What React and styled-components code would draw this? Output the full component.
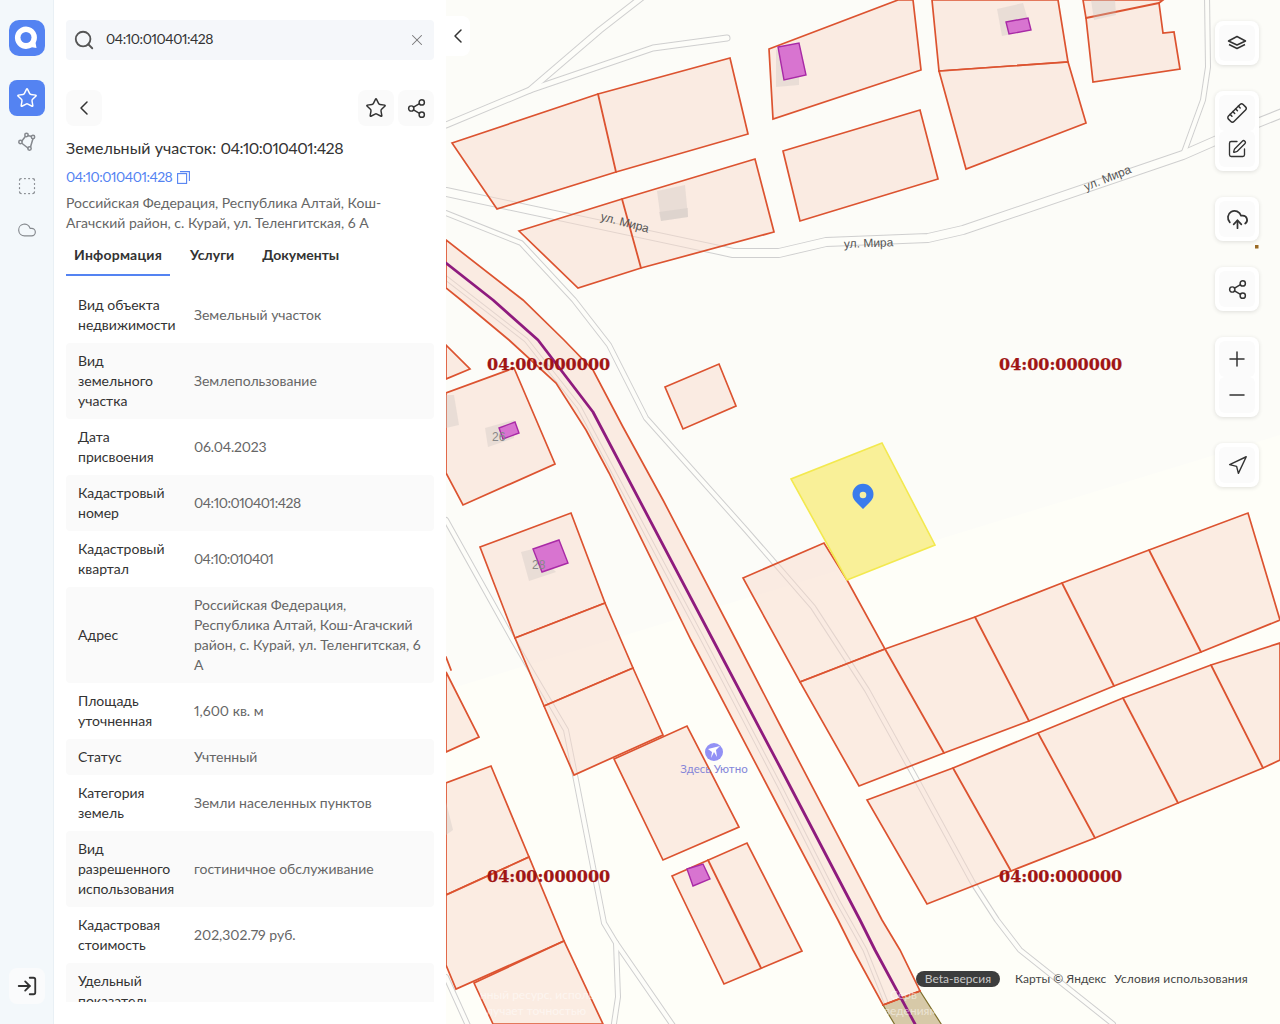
import React from 'react';
import styled, { createGlobalStyle } from 'styled-components';
import { Star, Search, X, ChevronLeft, Share2, SquareDashed, Cloud, LogIn, Ruler, SquarePen, CloudUpload, Plus, Minus, Navigation } from 'lucide-react';

const Global = createGlobalStyle`
  html, body { margin: 0; height: 100%; overflow: hidden; background: #fff; }
  body { font-family: "Lato", "Open Sans", "Liberation Sans", sans-serif; color: #333; font-variant-numeric: proportional-nums lining-nums; font-feature-settings: "pnum" 1, "lnum" 1; }
  * { box-sizing: border-box; }
`;

const Page = styled.div`display: flex; width: 1280px; height: 1024px; overflow: hidden;`;
const Rail = styled.nav`
  width: 54px; flex: none; display: flex; flex-direction: column; align-items: center;
  padding: 20px 0 20px; background: #f3f8fb; border-right: 1px solid #e9f0f5;
`;
const RailTop = styled.div`display: flex; flex-direction: column; align-items: center; gap: 8px; margin-top: 24px; flex: 1;`;
const Logo = styled.div`width: 36px; height: 36px; border-radius: 10px; background: #5483f2;`;
const RailButton = styled.button`
  width: 36px; height: 36px; border: 0; padding: 0; border-radius: 8px; display: flex; align-items: center; justify-content: center;
  background: ${p => p.$active ? '#5483f2' : p.$soft ? '#fafbfc' : 'transparent'};
  color: ${p => p.$active ? '#fff' : p.$soft ? '#333' : '#85898e'};
`;
const Panel = styled.aside`width: 392px; flex: none; background: #fff; display: flex; flex-direction: column; padding: 20px 12px 22px;`;
const SearchBar = styled.div`height: 40px; flex: none; background: #f5f7fa; border-radius: 4px; display: flex; align-items: center; padding: 0 8px 0 7px; color: #555;`;
const SearchText = styled.span`flex: 1; margin-left: 11px; font-size: 14px; line-height: 20px; margin-top: -2px; letter-spacing: -.45px; color: #333;`;
const ActionRow = styled.div`display: flex; align-items: center; margin-top: 30px; gap: 4px;`;
const SquareButton = styled.button`
  width: 36px; height: 36px; border: 0; padding: 0; border-radius: 8px; background: #fafafa; color: #333;
  display: flex; align-items: center; justify-content: center;
`;
const Spacer = styled.div`flex: 1;`;
const Title = styled.h1`margin: 11px 0 0; font-size: 16px; line-height: 22px; font-weight: 400; letter-spacing: .05px; color: #333;`;
const Digits = styled.span`letter-spacing: -.5px;`;
const LinkRow = styled.div`display: flex; align-items: center; gap: 5px; margin-top: 8px; font-size: 14px; line-height: 20px; color: #5483f2;`;
const Address = styled.p`margin: 6px 0 0; font-size: 14px; line-height: 20px; color: #666;`;
const Tabs = styled.div`display: flex; gap: 12px; margin-top: 10px; height: 44px; flex: none;`;
const Tab = styled.div`
  padding: 2px 8px 0; height: 33px; font-size: 14px; line-height: 20px; font-weight: 700; color: #333;
  letter-spacing: ${p => p.$active ? '.2px' : '0'};
  border-bottom: 2px solid ${p => p.$active ? '#5483f2' : 'transparent'};
`;
const Table = styled.div`flex: 1; min-height: 0; overflow: hidden;`;
const Row = styled.div`
  display: grid; grid-template-columns: 104px 1fr; column-gap: 12px; align-items: center; padding: 8px 12px;
  font-size: 14px; line-height: 20px; border-radius: 4px;
  &:nth-child(even) { background: #fafafa; }
`;
const Label = styled.div`color: #333;`;
const Value = styled.div`color: #666; letter-spacing: ${p => p.$spacing || '0'};`;
const MapArea = styled.main`flex: 1; position: relative; overflow: hidden; background: #fcfcf9;`;
const MapDrawing = styled.svg`display: block; width: 834px; height: 1024px;`;
const Collapse = styled.button`
  position: absolute; left: 0; top: 16px; width: 24px; height: 40px; border: 0; padding: 0; background: #fff;
  border-radius: 0 8px 8px 0; display: flex; align-items: center; justify-content: center; color: #333;
`;
const Controls = styled.div`position: absolute; top: 21px; right: 21px; display: flex; flex-direction: column; gap: 26px;`;
const Card = styled.div`
  width: 44px; padding: 4px; background: #fff; border-radius: 8px; box-shadow: 0 1px 4px rgba(0,0,0,.12);
  display: flex; flex-direction: column;
`;
const CardButton = styled.button`
  width: 36px; height: 36px; border: 0; padding: 0; background: #fbfbfb; color: #333; display: flex; align-items: center; justify-content: center;
  border-radius: 6px;
`;
const MirroredRuler = styled(Ruler)`transform: scaleX(-1);`;
const Footer = styled.div`
  position: absolute; left: 470px; top: 971px; display: flex; align-items: center; font-size: 12px; line-height: 16px; color: #444;
`;
const Beta = styled.span`height: 16px; width: 84px; text-align: center; border-radius: 8px; background: #3c3d3d; color: #c9c9c9; margin-right: 15px;`;
const FooterLink = styled.span`margin-right: 8px; white-space: nowrap; letter-spacing: ${p => p.$wide ? '.15px' : '0'};`;

const rows = [
  ['Вид объекта недвижимости', 'Земельный участок'],
  ['Вид земельного участка', 'Землепользование'],
  ['Дата присвоения', '06.04.2023', '-.2px'],
  ['Кадастровый номер', '04:10:010401:428', '-.48px'],
  ['Кадастровый квартал', '04:10:010401', '-.6px'],
  ['Адрес', 'Российская Федерация, Республика Алтай, Кош-Агачский район, с. Курай, ул. Теленгитская, 6 А'],
  ['Площадь уточненная', '1,600 кв. м'],
  ['Статус', 'Учтенный'],
  ['Категория земель', 'Земли населенных пунктов'],
  ['Вид разрешенного использования', 'гостиничное обслуживание'],
  ['Кадастровая стоимость', '202,302.79 руб.'],
  ['Удельный показатель', ''],
];

const parcels = [
  '452,143 598,94 730,58 748,134 616,172 497,209',
  '519,231 622,199 755,159 774,232 641,268 578,288',
  '769,49 898,0 913,0 921,70 773,119',
  '783,151 920,110 938,179 800,221',
  '932,0 1058,0 1068,62 939,71',
  '939,71 1068,62 1086,123 966,169',
  '1083,0 1163,0 1159,3 1163,33 1174,32 1180,69 1093,82 1086,18',
  '446,240 523,300 564,340 593,370 623,427 663,500 736,640 780,725 882,920 900,950 920,991 883,1005 853,950 838,920 780,810 691,640 609,473 586,430 556,383 509,340 461,300 446,288',
  '665,387 719,364 736,406 683,429',
  '446,345 470,369 446,379',
  '446,393 514,368 555,464 463,505 446,473',
  '480,547 571,513 605,603 515,638',
  '515,638 605,603 633,668 544,706',
  '544,706 633,668 663,735 574,775',
  '614,759 687,726 739,827 663,860',
  '446,672 479,737 446,752',
  '446,783 491,766 529,857 446,895',
  '446,895 529,857 564,941 456,989 446,965',
  '474,983 564,941 603,1024 493,1024',
  '672,876 747,843 802,951 724,984',
  '743,578 824,543 847,580 885,649 800,682',
  '885,649 975,617 1062,583 1149,550 1248,513 1280,620 1201,652 1114,686 1029,721 944,753 859,786 800,682',
  '867,800 953,768 1038,733 1123,698 1211,665 1280,643 1280,760 1263,768 1178,803 1095,838 1011,871 927,904',
];
const dividers = [
  '598,94 616,172', '622,199 641,268', '975,617 1029,721', '1062,583 1114,686', '1149,550 1201,652', '885,649 944,753',
  '953,768 1011,871', '1038,733 1095,838', '1123,698 1178,803', '1211,665 1263,768', '708,860 761,968', '883,1005 920,991',
  '1086,18 1159,3', '446,657 451,670',
];
const shadows = [
  '776,50 799,45 799,85 776,87', '997,9 1023,3 1031,30 1002,36', '1091,0 1115,0 1116,15 1094,20',
  '657,191 685,185 688,217 661,221', '659,212 688,208 688,217 661,221', '446,395 454,395 459,425 446,428', '485,428 514,420 514,438 488,447',
  '521,552 533,549 556,572 529,581', '446,802 453,830 446,835',
];
const pinks = [
  '778,47 799,43 806,75 784,80', '1006,22 1028,18 1031,30 1009,34', '499,428 515,422 519,433 503,439',
  '533,549 559,540 568,563 542,572', '687,869 703,864 710,879 693,886',
];
const roads = [
  ['446,125 530,90 600,30 645,-5', 7], ['530,90 653,48 727,38', 7],
  ['446,192 733,253 779,253 826,242 928,238 963,230 1183,155 1240,130 1290,110', 10],
  ['1183,155 1203,100 1208,67 1207,-5', 6],
  ['446,213 521,243 574,300 609,345 646,418 746,530 813,607 867,690 913,773 973,883 997,920 1020,950 1113,1024', 6],
  ['446,520 513,640 566,730 576,780 604,923 616,943 676,1030', 6], ['616,943 618,997 613,1030', 6],
  ['446,977 470,1030', 6],
  ['446,278 526,340 579,407 703,640 780,787 837,900 865,950 887,1005', 5],
];

const Line = ({ points, color, width, join = 'round' }) => (
  <polyline points={points} fill="none" stroke={color} strokeWidth={width} strokeLinejoin={join} strokeLinecap="round" />
);
const CadastreLabel = ({ x, y }) => (
  <text x={x} y={y} fontFamily="DejaVu Serif, serif" fontWeight="700" fontSize="16" fill="#a01515" stroke="#a01515" strokeWidth=".25">04:00:000000</text>
);
const StreetLabel = ({ x, y, angle }) => (
  <text x={x} y={y} transform={`rotate(${angle} ${x} ${y})`} fontFamily="Liberation Sans, sans-serif" fontSize="12" fill="#555">ул. Мира</text>
);

const MapPicture = () => (
  <MapDrawing viewBox="446 0 834 1024">
    <rect x="446" y="0" width="834" height="1024" fill="#fcfcf8" />
    <polygon points="446,690 1280,435 1280,1024 446,1024" fill="#fefef8" />
    {roads.map(([p, w], i) => <Line key={i} points={p} color="#cfcfcf" width={w} />)}
    {roads.map(([p, w], i) => <Line key={i} points={p} color="#fdfdf9" width={w - 2} />)}
    <polygon points="883,1005 920,991 945,1030 898,1030" fill="#d7c9a8" stroke="#7f6f2c" strokeWidth="1.2" />
    {parcels.map((p, i) => <polygon key={i} points={p} fill="#f7d9cb" fillOpacity=".5" stroke="#dc5330" strokeWidth="1.7" strokeLinejoin="miter" />)}
    {dividers.map((p, i) => <Line key={i} points={p} color="#dc5330" width="1.8" />)}
    {shadows.map((p, i) => <polygon key={i} points={p} fill="#c8c2bf" fillOpacity=".32" />)}
    <Line points="446,263 493,300 538,340 593,412 713,640 780,767 860,920 875,950 915,1024" color="#8e1b7e" width="2.8" />
    {pinks.map((p, i) => <polygon key={i} points={p} fill="#d874d0" stroke="#a82aa6" strokeWidth="1.4" />)}
    <text x="492" y="441" fontFamily="Liberation Sans, sans-serif" fontSize="12" fill="#888">26</text>
    <text x="532" y="569" fontFamily="Liberation Sans, sans-serif" fontSize="12" fill="#888">28</text>
    <polygon points="882,443 791,479 847,580 935,545" fill="#f9f098" stroke="#f3e94f" strokeWidth="1.6" />
    <path d="M863 509l-7-7a10.500 10.500 0 1 1 14 0z" fill="#3a7cec" />
    <circle cx="863" cy="495" r="3.300" fill="#f7efa4" />
    <circle cx="714" cy="752" r="9" fill="#9291f5" />
    <path d="M708 749l12-3-4 4 1 7-3-5-3 6 1-6z" fill="#fff" />
    <text x="714" y="772.500" textAnchor="middle" fontFamily="Lato, Liberation Sans, sans-serif" fontSize="11.500" fill="#8586d8">Здесь Уютно</text>
    <rect x="1255" y="245" width="3.500" height="3.500" fill="#9a6a25" />
    <CadastreLabel x="487" y="370" />
    <CadastreLabel x="999" y="370" />
    <CadastreLabel x="487" y="882" />
    <CadastreLabel x="999" y="882" />
    <StreetLabel x="600" y="220" angle="15" />
    <StreetLabel x="844" y="248" angle="-2" />
    <StreetLabel x="1086" y="191" angle="-22" />
    <g fontFamily="Lato, Liberation Sans, sans-serif" fontSize="12" fill="#fff" fillOpacity=".5">
      <text x="480" y="999">нный ресурс, использ</text>
      <text x="486" y="1015">лучает точностью</text>
      <text x="890" y="999">Серв</text>
      <text x="884" y="1015">ведениям</text>
    </g>
  </MapDrawing>
);

const LogoMark = () => (
  <Logo>
    <svg width="36" height="36" viewBox="0 0 36 36">
      <path d="M17 6.500a11.200 11.200 0 1 0 6 20.700l4.500 .8-.9-5a11.200 11.200 0 0 0-9.600-16.500z" fill="#fff" />
      <circle cx="17" cy="17.500" r="5.500" fill="#5483f2" />
    </svg>
  </Logo>
);
const PolygonIcon = () => (
  <svg width="20" height="20" viewBox="0 0 20 20" fill="none" stroke="currentColor" strokeWidth="1.500">
    <path d="M4.500 9.500L8.500 4.200M10.500 3.500L15 4.500M16 6.500L13.500 15M11.500 16.500L4.500 11" />
    <circle cx="3.500" cy="10" r="1.700" /><circle cx="9.500" cy="3" r="1.700" /><circle cx="16" cy="5" r="1.700" /><circle cx="12.500" cy="16.500" r="1.700" />
  </svg>
);
const CopyIcon = () => (
  <svg width="13" height="13" viewBox="0 0 13 13" fill="none" stroke="currentColor" strokeWidth="1.100">
    <rect x=".6" y="2.600" width="9" height="9.800" /><path d="M3 .6h9.400v9.400" />
  </svg>
);
const LayersIcon = () => (
  <svg width="20" height="20" viewBox="0 0 20 20" fill="none" stroke="currentColor" strokeWidth="1.500" strokeLinejoin="round">
    <path d="M10 3.500L18.500 8 10 12 1.500 8z" /><path d="M2 11.500L10 15.500l8-4" />
  </svg>
);

const App = () => (
  <Page>
    <Global />
    <Rail>
      <LogoMark />
      <RailTop>
        <RailButton $active><Star size={22} strokeWidth={1.6} /></RailButton>
        <RailButton><PolygonIcon /></RailButton>
        <RailButton><SquareDashed size={20} strokeWidth={1.5} /></RailButton>
        <RailButton><Cloud size={20} strokeWidth={1.4} /></RailButton>
      </RailTop>
      <RailButton $soft><LogIn size={22} strokeWidth={2} /></RailButton>
    </Rail>
    <Panel>
      <SearchBar>
        <Search size={22} strokeWidth={2} />
        <SearchText>04:10:010401:428</SearchText>
        <X size={18} strokeWidth={1.4} color="#777" />
      </SearchBar>
      <ActionRow>
        <SquareButton><ChevronLeft size={24} strokeWidth={1.5} /></SquareButton>
        <Spacer />
        <SquareButton><Star size={22} strokeWidth={1.6} /></SquareButton>
        <SquareButton><Share2 size={21} strokeWidth={1.7} /></SquareButton>
      </ActionRow>
      <Title>Земельный участок: <Digits>04:10:010401:428</Digits></Title>
      <LinkRow><Digits>04:10:010401:428</Digits> <CopyIcon /></LinkRow>
      <Address>Российская Федерация, Республика Алтай, Кош-Агачский район, с. Курай, ул. Теленгитская, 6 А</Address>
      <Tabs>
        <Tab $active>Информация</Tab>
        <Tab>Услуги</Tab>
        <Tab>Документы</Tab>
      </Tabs>
      <Table>
        {rows.map(([l, v, s]) => (
          <Row key={l}><Label>{l}</Label><Value $spacing={s}>{v}</Value></Row>
        ))}
      </Table>
    </Panel>
    <MapArea>
      <MapPicture />
      <Collapse><ChevronLeft size={24} strokeWidth={1.5} /></Collapse>
      <Controls>
        <Card><CardButton><LayersIcon /></CardButton></Card>
        <Card>
          <CardButton><MirroredRuler size={22} strokeWidth={1.6} /></CardButton>
          <CardButton><SquarePen size={20} strokeWidth={1.6} /></CardButton>
        </Card>
        <Card><CardButton><CloudUpload size={23} strokeWidth={1.8} /></CardButton></Card>
        <Card><CardButton><Share2 size={21} strokeWidth={1.7} /></CardButton></Card>
        <Card>
          <CardButton><Plus size={24} strokeWidth={1.5} /></CardButton>
          <CardButton><Minus size={24} strokeWidth={1.5} /></CardButton>
        </Card>
        <Card><CardButton><Navigation size={21} strokeWidth={1.6} /></CardButton></Card>
      </Controls>
      <Footer>
        <Beta>Beta-версия</Beta>
        <FooterLink>Карты © Яндекс</FooterLink>
        <FooterLink $wide>Условия использования</FooterLink>
      </Footer>
    </MapArea>
  </Page>
);

export default App;
